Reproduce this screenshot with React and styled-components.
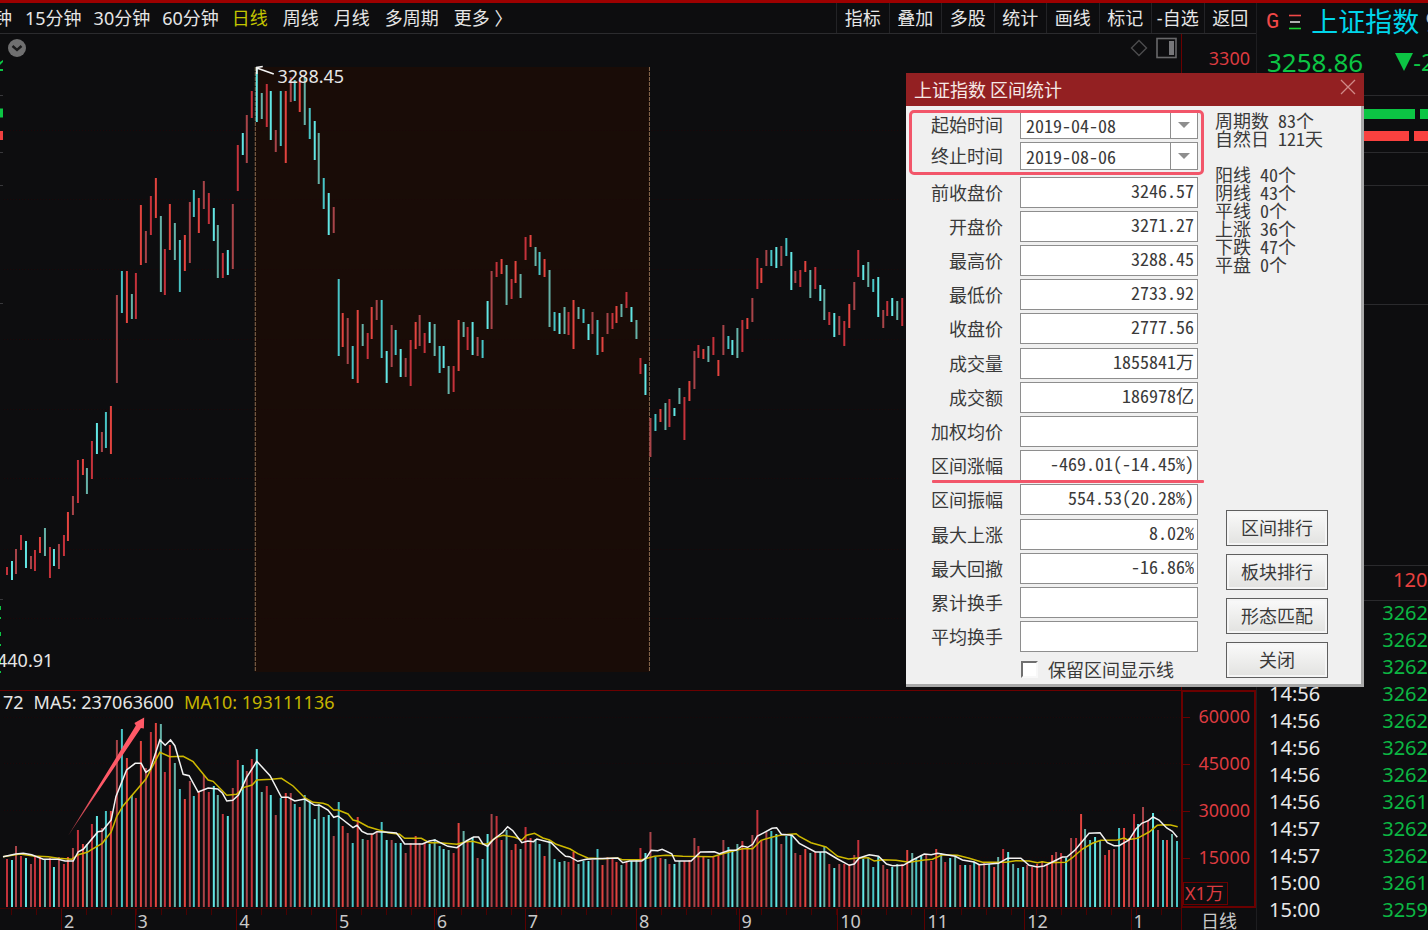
import React from "react";
import styled, { createGlobalStyle } from "styled-components";

const GlobalStyle = createGlobalStyle`
  * { box-sizing: border-box; }
  body {
    margin: 0;
    background: #0d0d0f;
    font-family: "Noto Sans", "Noto Sans CJK SC", sans-serif;
    font-size: 18px;
    color: #e6e6e6;
    overflow: hidden;
  }
`;

/* ---------- data ---------- */

// high y, low y and direction (r = up, c = down) of every daily bar
const PRICE = `567-575r 561-580c 549-574r 535-550r 541-568c 556-569r 550-571r 537-553r 528-556c 547-578r
549-566c 544-569r 535-556r 512-541r 496-515r 460-503r 459-475r 468-494c 441-479r 423-454c
432-452r 412-448c 406-454r 295-383r 271-313c 271-323r 294-319c 273-319r 205-265r 231-263r
196-235r 178-218r 216-292c 249-295r 204-250r 223-260c 240-292c 235-271r 202-263r 190-217c
198-233r 181-209r 193-224r 208-241c 225-278c 253-278r 250-275c 204-269r 145-191r 133-155c
115-163r 91-118r 67-122c 93-119c 84-127r 91-140c 130-152r 91-146c 91-163r 77-102r
80-101c 80-112r 77-125c 108-139c 121-160c 133-184c 178-209c 193-235c 207-233r 279-356c
313-347r 318-364r 346-379c 310-383r 324-346c 333-359r 307-339r 300-320r 300-358c 351-383c
325-367r 330-355c 349-377c 358-377r 340-386r 322-349r 315-346r 333-353r 322-343c 324-356c
346-373c 346-368c 366-394c 366-392r 320-371r 322-337c 327-350r 322-355c 337-356r 340-358c
301-329c 271-329r 262-277r 259-274r 265-305c 279-299r 261-283r 274-298c 237-260r 235-247r
247-266c 252-275c 259-277r 270-327c 312-331c 313-334c 307-334c 312-335r 300-349r 307-319c
309-323c 324-340c 312-334r 320-355c 337-352r 313-334r 313-329r 306-323r 304-317c 292-308r
307-322c 320-339c 358-374r 364-395c 418-457r 414-431c 409-422r 403-430c 399-427r 408-416c
388-404c 397-440r 381-401r 351-389r 345-358r 349-359r 346-362c 337-355r 360-376r 325-355r
336-349c 340-355c 328-358c 320-352r 318-329r 298-322r 258-289r 268-283r 250-266r 250-266c
247-268c 246-266r 238-256c 252-290c 271-283r 270-287r 261-272r 270-298c 267-289r 285-301c
289-320c 312-325r 313-337c 316-335r 321-346r 304-328r 282-310r 250-277r 265-280c 262-287c
279-292c 277-317c 310-328r 301-316r 298-316c 301-320c 298-326r`
  .split(/\s+/)
  .map((s) => {
    const [, hi, lo, dir] = s.match(/(\d+)-(\d+)([rc])/);
    return { hi: +hi, lo: +lo, dir };
  });

// directions of the days whose candles lie behind the dialog
const LATE_DIRS = "rcccrrrcrccrcrcrrcrcrccccrrrrrrrrcrrrccccrrrcrrrcrrcrcrcc";

const VOLUME = `859 860 846 856 858 864 856 856 860 858 867 857 864 857 848 830 844 844 824 816
828 811 811 740 729 758 795 798 741 768 732 723 724 772 745 763 789 799 781 796
792 775 792 786 795 814 816 788 760 765 771 759 749 792 786 795 815 798 793 793
804 807 795 801 819 804 817 815 836 802 826 833 843 817 839 840 834 831 822 840
840 843 843 853 843 836 843 843 844 839 846 849 850 853 823 831 841 837 858 859
834 814 816 840 830 850 844 849 827 838 839 844 856 840 859 862 861 862 852 864
861 861 860 849 865 857 859 862 865 862 861 859 848 853 832 857 858 859 864 864
861 861 860 838 846 856 859 856 856 840 847 850 844 841 847 835 810 840 832 831
834 844 836 835 853 855 849 853 852 852 846 864 868 864 864 864 855 840 859 857
867 857 865 869 867 864 864 850 853 858 855 855 861 849 853 862 858 857 865 865
865 862 865 862 864 867 857 849 852 864 868 867 865 867 864 861 864 855 852 853
858 838 838 814 829 840 837 840 855 850 849 828 828 838 814 824 807 820 813 830
840 840 834 841`
  .split(/\s+/)
  .map(Number);

// bar index -> x of known sessions; the ones between are interpolated
const ANCHORS = [[0, 7], [22, 111], [24, 122], [52, 257], [134, 651], [186, 903], [243, 1178]];
const barX = (i) => {
  const k = Math.max(1, ANCHORS.findIndex(([n]) => i <= n));
  const [n0, x0] = ANCHORS[k - 1];
  const [n1, x1] = ANCHORS[k];
  return Math.round(x0 + ((i - n0) * (x1 - x0)) / (n1 - n0));
};

const UP = ["#c4323b", "#e2443f", "#a84449"];
const DOWN = ["#48c4c6", "#62e6e4", "#66b2a8"];
const barColor = (dir, i) => (dir === "r" ? UP : DOWN)[i % 3];

// curve parts are kept in thirds of a chart unit, each from its own origin
const curve = (parts) =>
  parts
    .flatMap(([x0, y0, pts]) =>
      pts.split(" ").map((p) => {
        const [x, y] = p.split(",").map(Number);
        return `${(x0 + x / 3).toFixed(1)},${(y0 + y / 3).toFixed(1)}`;
      })
    )
    .join(" ");

const MA5 = curve([
  [0, 680, "9,530 47,522 70,520 95,524 130,538 175,538 195,543 220,543 235,515 250,508 294,455 307,453 334,420 348,350 380,270 406,250 424,250 438,277 451,268 480,180 496,196 512,180 525,197 550,283 568,287 595,336 625,324 654,327 668,340 681,363 699,361 716,345 740,293 771,244 811,287 845,352 865,352 885,363 915,357 945,376 960,376 985,390 1002,412 1015,408 1060,443 1072,436 1087,454 1103,462 1120,462 1132,455 1165,457 1190,459 1203,475"],
  [400, 780, "15,192 68,192 89,183 106,180 145,199 172,203 200,183 222,171 237,171 250,192 264,199 280,180 310,157 324,140 340,152 367,188 385,183 402,185 412,177 455,188 480,213 498,229 510,230 535,244 560,238 590,236 655,234 670,248 690,243 727,243 741,233 755,211 775,212 788,208 817,221 827,243 875,243 903,216 945,215 960,221 990,211 1010,211 1028,198 1045,202 1060,193 1074,168 1090,160 1118,145 1132,143 1146,163 1178,166"],
  [800, 680, "0,490 48,516 80,516 115,537 150,556 165,552 180,534 210,524 238,529 262,552 280,557 312,556 340,540 375,522 396,524 415,520 468,529 490,540 525,546 540,554 570,552 598,550 625,535 665,535 690,556 715,561 735,558 760,546 790,531 803,531 828,510 870,460 903,458 925,488 945,497 960,497 990,480 1010,448 1028,430 1048,422 1062,411 1080,420 1103,444 1120,454 1135,472"],
]);

const MA10 = curve([
  [0, 680, "9,530 60,522 100,528 145,530 175,535 215,538 235,524 262,517 276,508 307,490 334,456 350,410 370,377 438,297 480,217 510,230 550,229 580,245 625,300 640,304 681,346 710,343 733,322 757,315 771,300 815,298 845,295 880,318 915,353 940,367 970,370 985,375 1002,390 1015,390 1045,402 1060,420 1075,424 1105,440 1130,448 1165,458 1200,463"],
  [400, 780, "15,175 65,175 89,188 120,188 172,193 200,185 219,184 250,192 264,192 290,172 312,166 345,172 367,180 381,166 405,160 430,174 450,180 470,193 512,207 535,221 565,234 610,236 655,234 668,239 727,239 765,229 800,226 850,229 940,230 970,221 1010,211 1030,206 1060,206 1085,181 1120,171 1146,165 1190,161"],
  [800, 680, "0,469 35,488 80,501 115,529 148,537 175,534 206,533 225,543 250,539 290,541 330,547 375,540 400,538 430,524 475,526 510,535 550,547 620,547 650,542 690,543 715,548 730,545 745,548 800,547 820,533 850,507 880,490 905,481 955,480 975,474 985,479 1015,475 1050,456 1075,436 1095,434 1115,435 1136,440"],
]);

const MONTHS = [
  ["", 61], ["2", 73], ["3", 102], ["4", 100], ["5", 98], ["6", 91], ["7", 112],
  ["8", 103], ["9", 99], ["10", 87], ["11", 100], ["12", 107], ["1", 49],
];

const FIELD_GROUPS = [
  [["前收盘价", "3246.57"], ["开盘价", "3271.27"], ["最高价", "3288.45"], ["最低价", "2733.92"], ["收盘价", "2777.56"]],
  [["成交量", "1855841万"], ["成交额", "186978亿"], ["加权均价", ""], ["区间涨幅", "-469.01(-14.45%)", true], ["区间振幅", "554.53(20.28%)"]],
  [["最大上涨", "8.02%"], ["最大回撤", "-16.86%"], ["累计换手", ""], ["平均换手", ""]],
];

const TICKS = [
  ["", "3262"], ["", "3262"], ["", "3262"], ["14:56", "3262"], ["14:56", "3262"],
  ["14:56", "3262"], ["14:56", "3262"], ["14:56", "3261"], ["14:57", "3262"],
  ["14:57", "3262"], ["15:00", "3261"], ["15:00", "3259"], ["15:00", "3259"],
];

/* ---------- page ---------- */

const Page = styled.div`
  position: relative;
  display: flex;
  height: 100vh;
  overflow: hidden;
  background: #0d0d0f;
  border-top: 3px solid #9c0000;
`;

const ChartColumn = styled.main`
  flex: 1;
  min-width: 0;
  display: flex;
  flex-direction: column;
  border-right: 1px solid #1d1d20;
`;

const Toolbar = styled.nav`
  display: flex;
  justify-content: space-between;
  height: 31px;
  border-bottom: 1px solid #2b2b2e;
`;

const PeriodBar = styled.div`
  display: flex;
  align-items: center;
  gap: 13px;
`;

const PeriodGroup = styled.div`
  display: flex;
  gap: ${(p) => p.$gap}px;
`;

const ToolButton = styled.button`
  padding: 0;
  border: 0;
  background: none;
  font: inherit;
  line-height: 28px;
  white-space: nowrap;
  color: ${(p) => (p.$active ? "#c3c400" : "#e6e6e6")};
`;

const CutButton = styled(ToolButton)`
  display: flex;
  justify-content: flex-end;
  width: 12px;
  overflow: hidden;
`;

const ActionBar = styled.div`
  display: grid;
  grid-template-columns: repeat(8, 1fr);
  width: 420px;

  & > button {
    border-left: 1px solid #232326;
  }
`;

const Pane = styled.section`
  display: flex;
  flex: ${(p) => (p.$height ? `0 0 ${p.$height}px` : "1")};
  min-height: 0;
`;

const Plot = styled.div`
  position: relative;
  flex: 1;
  min-width: 0;
  display: flex;
  flex-direction: column;
  border-top: ${(p) => (p.$ruled ? "1px solid #6b0000" : "0")};
`;

const Chart = styled.svg`
  display: block;
  flex: 1;
  width: 100%;
  min-height: 0;
`;

const ChartLabel = styled.span`
  position: absolute;
  left: ${(p) => p.$left};
  top: ${(p) => p.$top};
  line-height: 24px;
`;

const CornerTool = styled.div`
  position: absolute;
  top: 3px;
  display: flex;
  gap: 8px;
  align-items: center;
  ${(p) => (p.$side === "left" ? "left: 7px;" : "right: 4px;")}
`;

const PriceAxis = styled.div`
  flex: 0 0 75px;
  border-left: 1px solid #6b0000;
  padding: 12px 6px 0 0;
  text-align: right;
  line-height: 24px;
  color: #dc3b40;
`;

const VolumeAxis = styled.div`
  flex: 0 0 75px;
  display: flex;
  flex-direction: column;
  padding: 1px 0;
  border: 2px solid #6b0000;
  color: #dc3b40;
`;

const AxisValue = styled.div`
  position: relative;
  padding-right: 4px;
  text-align: right;
  line-height: 47px;

  &::before {
    content: "";
    position: absolute;
    left: 0;
    top: 24px;
    width: 7px;
    height: 1px;
    background: #6b0000;
  }
`;

const UnitBox = styled.div`
  align-self: flex-start;
  margin-top: auto;
  padding: 0 3px 0 1px;
  border: 1px solid #6b0000;
  line-height: 21px;
`;

const Legend = styled.div`
  display: flex;
  gap: 10px;
  height: 25px;
  padding-left: 3px;
  line-height: 22px;
  white-space: pre;
`;

const LegendItem = styled.span`
  color: ${(p) => p.$color};
`;

const TimeAxis = styled.div`
  display: flex;
  height: 22px;
  color: #c9c9c9;
`;

const Months = styled.div`
  flex: 1;
  display: flex;
  border-top: 1px solid #3a0000;
  background: repeating-linear-gradient(90deg, #4a0000 0 1px, transparent 1px 25px) 11px 0 / 100% 6px no-repeat;
`;

const Month = styled.div`
  flex: ${(p) => p.$span} 1 0;
  min-width: 0;
  padding-left: 2px;
  border-left: ${(p) => (p.$first ? "0" : "1px solid #5a0000")};
  line-height: 24px;
`;

const PeriodName = styled.div`
  flex: 0 0 75px;
  border-left: 1px solid #5a0000;
  text-align: center;
  line-height: 26px;
`;

/* ---------- quote panel ---------- */

const QuotePanel = styled.aside`
  flex: 0 0 171px;
  overflow: hidden;
  white-space: nowrap;
`;

const QuoteTitle = styled.div`
  display: flex;
  align-items: center;
  gap: 9px;
  height: 38px;
  padding-left: 9px;

  svg { flex: none; }
`;

const Market = styled.span`
  font-family: "Liberation Mono", monospace;
  font-size: 22px;
  color: #f04848;
`;

const IndexName = styled.h1`
  display: flex;
  gap: 6px;
  margin: 0;
  font-size: 27px;
  font-weight: 400;
  line-height: 38px;
  color: #00d5ea;
`;

const IndexCode = styled.span`
  color: #b8b8b8;
`;

const LastPrice = styled.div`
  display: flex;
  gap: 32px;
  height: 55px;
  padding-left: 10px;
  border-bottom: 1px solid #2a2a2d;
  font-size: 26px;
  line-height: 42px;
  color: #0cc544;
`;

const Change = styled.span`
  display: flex;
  align-items: center;
  height: 42px;
  font-size: 24px;

  svg { flex: none; }
`;

const Breadth = styled.div`
  display: flex;
  flex-direction: column;
  gap: 12px;
  height: 57px;
  padding: 13px 0 0 100px;
  border-bottom: 1px solid #2a2a2d;
`;

const BreadthBar = styled.div`
  display: flex;
  gap: 5px;
  height: 10px;

  &::before,
  &::after {
    content: "";
    background: ${(p) => p.$color};
  }
  &::before { width: ${(p) => p.$width}px; }
  &::after { flex: 1; }
`;

const Slot = styled.div`
  height: ${(p) => p.$height}px;
  padding-left: 136px;
  border-bottom: 1px solid #2a2a2d;
  line-height: 27px;
  font-size: 20px;
  color: #e8413f;
`;

const Ticks = styled.table`
  width: 100%;
  border-collapse: collapse;
  font-size: 20px;
  line-height: 23px;

  td { padding: 0 0 4px; height: 27px; }
  td:first-child { width: 126px; padding-left: 12px; color: #e8e8e8; }
  td:last-child { color: #0cb743; }
`;

/* ---------- dialog ---------- */

const Dialog = styled.section`
  position: absolute;
  top: 70px;
  right: 64px;
  width: 458px;
  background: #f0f0f0;
  border: solid #a9a9a9;
  border-width: 0 3px 3px 0;
  color: #3a3a3a;
  font-family: "Noto Sans CJK SC", sans-serif;
  font-feature-settings: "hwid";
`;

const DialogHeader = styled.header`
  display: flex;
  justify-content: space-between;
  align-items: center;
  height: 33px;
  margin-right: -3px;
  padding: 0 8px 2px;
  background: #932022;
  color: #f6e9e6;
`;

const DialogTitle = styled.h2`
  margin: 0;
  font-size: 18px;
  font-weight: 400;
  font-feature-settings: normal;
`;

const CloseButton = styled.button`
  display: flex;
  padding: 0 0 4px;
  border: 0;
  background: none;
  color: #d08a88;
`;

const DialogBody = styled.div`
  display: flex;
  gap: 17px;
  padding: 5px 30px 2px 8px;
`;

const Form = styled.form`
  display: flex;
  flex-direction: column;
  gap: 4px;
  width: 284px;
`;

const FieldGroup = styled.div`
  position: relative;
  display: flex;
  flex-direction: column;
  gap: 3px;
`;

const DateGroup = styled(FieldGroup)`
  padding-bottom: 3px;
`;

const Field = styled.div`
  position: relative;
  display: grid;
  grid-template-columns: 89px 178px;
  column-gap: 17px;
  align-items: center;
`;

const FieldLabel = styled.label`
  padding-bottom: 2px;
  text-align: right;
  line-height: 26px;
`;

const ValueInput = styled.input`
  width: 100%;
  height: 31px;
  padding: 0 3px 6px;
  border: 1px solid #8e8e8e;
  border-radius: 0;
  background: #fff;
  color: #3a3a3a;
  font: inherit;
  line-height: 22px;
  font-feature-settings: inherit;
  text-align: right;
`;

const DateBox = styled.div`
  position: relative;

  &::after {
    content: "";
    position: absolute;
    right: 8px;
    top: 11px;
    border: 6px solid transparent;
    border-top-color: #8e8e8e;
    border-bottom: 0;
    pointer-events: none;
  }
  &::before {
    content: "";
    position: absolute;
    right: 27px;
    top: 1px;
    bottom: 1px;
    width: 1px;
    background: #8e8e8e;
    pointer-events: none;
  }
`;

const DateSelect = styled.select`
  display: block;
  appearance: none;
  width: 100%;
  height: 28px;
  padding: 0 30px 0 5px;
  border: 1px solid #8e8e8e;
  border-radius: 0;
  background: #fff;
  color: #3a3a3a;
  font: inherit;
  font-feature-settings: inherit;
`;

const DateMark = styled.div`
  position: absolute;
  left: -5px;
  right: -6px;
  top: -1px;
  height: 65px;
  border: 3px solid #f2566a;
  border-radius: 5px;
  pointer-events: none;
`;

const Underline = styled.div`
  position: absolute;
  left: 18px;
  right: -6px;
  bottom: -2px;
  height: 3px;
  border-radius: 1px;
  background: #f2566a;
`;

const KeepRow = styled.label`
  display: flex;
  align-items: center;
  gap: 10px;
  padding-left: 107px;
  line-height: 26px;
`;

const KeepBox = styled.input`
  appearance: none;
  width: 17px;
  height: 17px;
  margin: 0;
  background: #fff;
  border: 2px solid;
  border-color: #707070 #f8f8f8 #f8f8f8 #707070;
`;

const Side = styled.div`
  flex: 1;
  display: flex;
  flex-direction: column;
  justify-content: space-between;
  padding-bottom: 4px;
  white-space: nowrap;
`;

const Stats = styled.div`
  display: flex;
  flex-direction: column;
  gap: 18px;
  line-height: 18px;
  white-space: pre;
`;

const Actions = styled.div`
  display: flex;
  flex-direction: column;
  gap: 8px;
  padding-left: 11px;
`;

const ActionButton = styled.button`
  width: 102px;
  height: 36px;
  padding: 0 0 2px;
  border: 1px solid #5f5f5f;
  border-radius: 0;
  box-shadow: inset 0 0 0 2px #f5f5f5;
  background: linear-gradient(#fafafa, #e2e2e0);
  font: inherit;
  color: #3a3a3a;
`;

/* ---------- parts ---------- */

function PriceChart() {
  return (
    <Plot>
      <Chart viewBox="0 34 1182 656" preserveAspectRatio="none" aria-label="日线">
        <rect x="255" y="67" width="395" height="605" fill="#190c07" />
        {[130, 199, 269, 339, 409, 478, 549, 618].map((y) => (
          <path key={y} d={`M4 ${y}.5H1182`} stroke="#1d080a" strokeDasharray="1 2" />
        ))}
        <path d="M255.5 67V672M650 67V672" stroke="#8b6a4e" strokeDasharray="4 1" />
        {PRICE.map((b, i) => (
          <rect key={i} x={barX(i) - 1} y={b.hi} width="2" height={b.lo - b.hi} fill={barColor(b.dir, i)} />
        ))}
        <path d="M274 74L257 68M257 74V67.5L263 66.5" fill="none" stroke="#f4f4f4" strokeWidth="1.6" />
        <path d="M0 108.500h3v9H0z" fill="#0cc544" />
        <path d="M0 131h3v9H0z" fill="#f04040" />
        <path d="M0 62l3-2v2l-3 3zM0 69h3v2H0z" fill="#0cc544" />
        <path d="M0 95.500h3M0 152.500h3M0 185.500h3M0 303.500h3M0 599.500h3" stroke="#38383b" />
        <path d="M0 606h1v4H0zM0 632h1v4H0zM0 617h1v2H0zM0 659h1v4H0zM0 644h1v2H0zM0 671h1v2H0z" fill="#0cc544" />
      </Chart>
      <ChartLabel $left="23.500%" $top="30px">3288.45</ChartLabel>
      <ChartLabel $left="-3px" $top="614px">440.91</ChartLabel>
      <CornerTool $side="left">
        <svg width="20" height="22" viewBox="0 0 20 22">
          <circle cx="10" cy="11" r="9" fill="#6f6f70" />
          <path d="M5.500 9l4.500 4 4.500-4" fill="none" stroke="#1a1a1b" strokeWidth="2.400" />
        </svg>
      </CornerTool>
      <CornerTool $side="right">
        <svg width="18" height="18" viewBox="0 0 18 18">
          <path d="M9 1.500L16.500 9 9 16.500 1.500 9z" fill="none" stroke="#4c4c4e" strokeWidth="1.400" />
        </svg>
        <svg width="21" height="22" viewBox="0 0 21 22">
          <rect x="1" y="1.500" width="19" height="19" fill="none" stroke="#68686a" strokeWidth="1.600" />
          <rect x="13" y="4" width="5" height="14" fill="#77777a" />
        </svg>
      </CornerTool>
    </Plot>
  );
}

function VolumeChart() {
  return (
    <Plot $ruled>
      <Legend>
        <LegendItem $color="#e6e6e6">72</LegendItem>
        <LegendItem $color="#e6e6e6">MA5: 237063600</LegendItem>
        <LegendItem $color="#c6b400">MA10: 193111136</LegendItem>
      </Legend>
      <Chart viewBox="0 716 1182 192" preserveAspectRatio="none" aria-label="成交量">
        <defs>
          <linearGradient id="rise" x1="0" y1="1" x2="1" y2="0">
            <stop offset="0" stopColor="#a03840" />
            <stop offset="0.400" stopColor="#ff5967" />
          </linearGradient>
        </defs>
        {[717, 763, 810, 857].map((y) => (
          <path key={y} d={`M4 ${y}.5H1182`} stroke="#1d080a" strokeDasharray="1 2" />
        ))}
        {VOLUME.map((top, i) => (
          <rect
            key={i}
            x={barX(i) - 1}
            y={top}
            width="2"
            height={907 - top}
            fill={barColor(PRICE[i] ? PRICE[i].dir : LATE_DIRS[i - PRICE.length], i)}
          />
        ))}
        <polyline points={MA10} fill="none" stroke="#cdb800" strokeWidth="1.500" />
        <polyline points={MA5} fill="none" stroke="#f2f2f2" strokeWidth="1.500" />
        <path d="M68 836L136 725.500 134.500 723 144.300 717.500 144 728.500 141 728z" fill="url(#rise)" />
      </Chart>
    </Plot>
  );
}

function IntervalDialog() {
  return (
    <Dialog role="dialog" aria-labelledby="interval-title">
      <DialogHeader>
        <DialogTitle id="interval-title">上证指数 区间统计</DialogTitle>
        <CloseButton aria-label="关闭窗口">
          <svg width="16" height="16" viewBox="0 0 16 16">
            <path d="M1 1l14 14M15 1L1 15" stroke="currentColor" strokeWidth="1.300" />
          </svg>
        </CloseButton>
      </DialogHeader>
      <DialogBody>
        <Form>
          <DateGroup>
            {[["起始时间", "2019-04-08"], ["终止时间", "2019-08-06"]].map(([label, value]) => (
              <Field key={label}>
                <FieldLabel htmlFor={label}>{label}</FieldLabel>
                <DateBox>
                  <DateSelect id={label} defaultValue={value}>
                    <option>{value}</option>
                  </DateSelect>
                </DateBox>
              </Field>
            ))}
            <DateMark />
          </DateGroup>
          {FIELD_GROUPS.map((group, g) => (
            <FieldGroup key={g}>
              {group.map(([label, value, marked]) => (
                <Field key={label}>
                  <FieldLabel htmlFor={label}>{label}</FieldLabel>
                  <ValueInput id={label} defaultValue={value} readOnly />
                  {marked && <Underline />}
                </Field>
              ))}
            </FieldGroup>
          ))}
          <KeepRow>
            <KeepBox type="checkbox" />
            保留区间显示线
          </KeepRow>
        </Form>
        <Side>
          <Stats>
            <div>{"周期数 83个\n自然日 121天"}</div>
            <div>{"阳线 40个\n阴线 43个\n平线 0个\n上涨 36个\n下跌 47个\n平盘 0个"}</div>
          </Stats>
          <Actions>
            {["区间排行", "板块排行", "形态匹配", "关闭"].map((name) => (
              <ActionButton key={name}>{name}</ActionButton>
            ))}
          </Actions>
        </Side>
      </DialogBody>
    </Dialog>
  );
}

export default function App() {
  return (
    <>
      <GlobalStyle />
      <Page>
        <ChartColumn>
          <Toolbar>
            <PeriodBar>
              <CutButton>钟</CutButton>
              <PeriodGroup $gap={12}>
                {["15分钟", "30分钟", "60分钟"].map((t) => (
                  <ToolButton key={t}>{t}</ToolButton>
                ))}
              </PeriodGroup>
              <PeriodGroup $gap={15}>
                {["日线", "周线", "月线", "多周期", "更多 〉"].map((t) => (
                  <ToolButton key={t} $active={t === "日线"}>{t}</ToolButton>
                ))}
              </PeriodGroup>
            </PeriodBar>
            <ActionBar>
              {["指标", "叠加", "多股", "统计", "画线", "标记", "-自选", "返回"].map((t) => (
                <ToolButton key={t}>{t}</ToolButton>
              ))}
            </ActionBar>
          </Toolbar>
          <Pane>
            <PriceChart />
            <PriceAxis>3300</PriceAxis>
          </Pane>
          <Pane $height={218}>
            <VolumeChart />
            <VolumeAxis>
              {["60000", "45000", "30000", "15000"].map((v) => (
                <AxisValue key={v}>{v}</AxisValue>
              ))}
              <UnitBox>X1万</UnitBox>
            </VolumeAxis>
          </Pane>
          <TimeAxis>
            <Months>
              {MONTHS.map(([name, span], i) => (
                <Month key={i} $span={span} $first={i === 0}>{name}</Month>
              ))}
            </Months>
            <PeriodName>日线</PeriodName>
          </TimeAxis>
        </ChartColumn>
        <QuotePanel>
          <QuoteTitle>
            <Market>G</Market>
            <svg width="14" height="16" viewBox="0 0 14 16">
              <path d="M1 1.500h12" stroke="#f04848" strokeWidth="1.600" />
              <path d="M2 8h10" stroke="#d8d8d8" strokeWidth="1.600" />
              <path d="M1 14.500h12" stroke="#18d030" strokeWidth="1.600" />
            </svg>
            <IndexName>上证指数 <IndexCode>9</IndexCode></IndexName>
          </QuoteTitle>
          <LastPrice>
            3258.86
            <Change>
              <svg width="18" height="18" viewBox="0 0 18 18">
                <path d="M0 0h18L9 18z" fill="currentColor" />
              </svg>
              -2
            </Change>
          </LastPrice>
          <Breadth>
            <BreadthBar $color="#0cc544" $width={58} />
            <BreadthBar $color="#f9413f" $width={52} />
          </Breadth>
          <Slot $height={33} />
          <Slot $height={119} />
          <Slot $height={261} />
          <Slot $height={35}>120</Slot>
          <Ticks>
            <tbody>
              {TICKS.map(([time, price], i) => (
                <tr key={i}>
                  <td>{time}</td>
                  <td>{price}</td>
                </tr>
              ))}
            </tbody>
          </Ticks>
        </QuotePanel>
        <IntervalDialog />
      </Page>
    </>
  );
}
